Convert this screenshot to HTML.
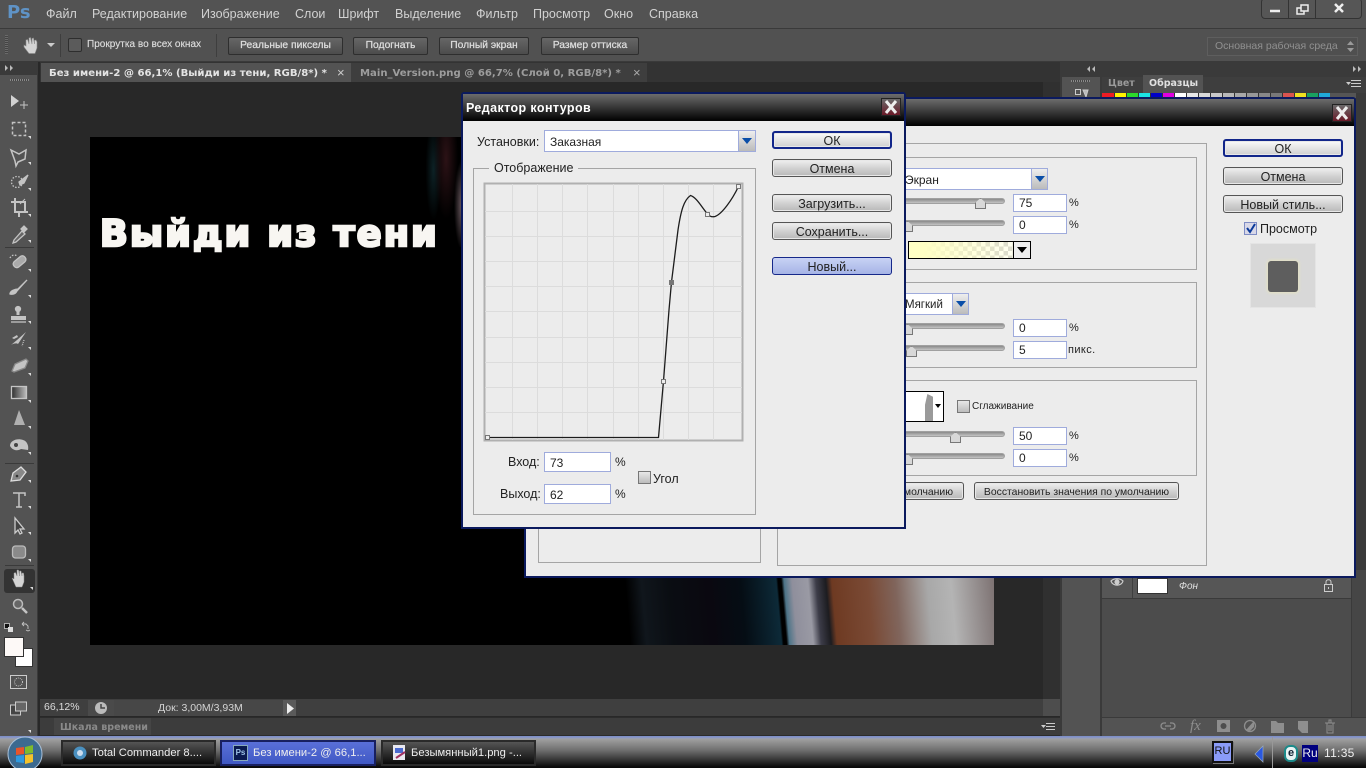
<!DOCTYPE html>
<html lang="ru"><head><meta charset="utf-8"><title>Photoshop</title>
<style>
html,body{margin:0;padding:0;width:1366px;height:768px;overflow:hidden;background:#282828}
body{position:relative;font-family:"Liberation Sans",sans-serif;font-size:12px;color:#222}
div,span,svg{position:absolute;box-sizing:border-box}
.t{white-space:nowrap;line-height:14px}
.m{top:7px;color:#d2d2d2;font-size:12.5px}
.ob{top:37px;height:18px;border:1px solid #2e2e2e;border-radius:2px;background:linear-gradient(#666,#4c4c4c);color:#dedede;font:10.300px/15px "Liberation Sans",sans-serif;text-align:center;white-space:nowrap;-webkit-text-stroke:.25px #dedede}
.tab{font:bold 10.100px/19px "DejaVu Sans",sans-serif;white-space:nowrap}
.dlg{background:#ececec;border:2px solid #0b1a5e;border-radius:3px 3px 0 0}
.title{left:0;right:0;top:0;background:linear-gradient(#6c6c6c,#000)}
.x{background:linear-gradient(#6a6a6a,#6a1a28);border:1px solid #222}
.btn{border:1px solid #555;border-radius:3px;background:linear-gradient(#f0f0f0,#d2d2d2 50%,#b8b8b8);box-shadow:inset 0 0 0 1px #e8e8e8;text-align:center;font-size:12.5px;line-height:19px;color:#222;white-space:nowrap}
.ok{border:2px solid #12268a;line-height:17px;background:linear-gradient(#fafafa,#cfcfcf)}
.group{border:1px solid #a5a5a5}
.inp{background:#fff;border:1px solid #9fabdc;font-size:12px;line-height:17px;padding-left:5px;color:#222}
.ddarrow{background:linear-gradient(#eee,#bbb);border-left:1px solid #9fabdc}
.ddarrow:after{content:"";position:absolute;left:3px;top:7px;border:5px solid transparent;border-top:6px solid #0a4ea8;border-bottom:0}
.track{height:6px;border-radius:3px;background:linear-gradient(#8a8a8a,#c4c4c4);border:1px solid #a0a0a0}
.th{width:11px;height:11px;background:#d8d8d8;border:1px solid #777;clip-path:polygon(50% 0,100% 45%,100% 100%,0 100%,0 45%)}
.cb{background:linear-gradient(#e8e8e8,#bcbcbc);border:1px solid #777}
.tb{color:#eee;font-size:12.5px;white-space:nowrap;line-height:14px}
.task{top:740px;height:26px;border:2px solid #2a2a2a;background:linear-gradient(#555,#0a0a0a)}
</style></head><body>

<!-- menu bar -->
<div style="left:0;top:0;width:1366px;height:29px;background:#535353;border-bottom:1px solid #3a3a3a"></div>
<div class="t" style="left:7px;top:2px;font:bold 18px/22px 'DejaVu Sans',sans-serif;color:#5f93c6">Ps</div>
<span class="t m" style="left:46px">Файл</span>
<span class="t m" style="left:92px">Редактирование</span>
<span class="t m" style="left:201px">Изображение</span>
<span class="t m" style="left:295px">Слои</span>
<span class="t m" style="left:338px">Шрифт</span>
<span class="t m" style="left:395px">Выделение</span>
<span class="t m" style="left:476px">Фильтр</span>
<span class="t m" style="left:533px">Просмотр</span>
<span class="t m" style="left:604px">Окно</span>
<span class="t m" style="left:649px">Справка</span>
<!-- window controls -->
<div style="left:1261px;top:-2px;width:101px;height:21px;border:1px solid #333;border-radius:4px;background:#565656">
<div style="left:26px;top:0;width:1px;height:20px;background:#333"></div><div style="left:53px;top:0;width:1px;height:20px;background:#333"></div></div>
<svg style="left:1261px;top:0" width="101" height="18" fill="none" stroke="#eee">
<path d="M9 11h10" stroke-width="2.5"/>
<rect x="36" y="8" width="7" height="6" stroke-width="1.5"/><rect x="40" y="5" width="7" height="6" stroke-width="1.5" fill="#565656"/>
<path d="M74 4l8 8M82 4l-8 8" stroke-width="2.5"/></svg>

<!-- options bar -->
<div style="left:0;top:29px;width:1366px;height:33px;background:#515151;border-bottom:1px solid #3a3a3a"></div>
<div style="left:5px;top:35px;width:3px;height:19px;background:repeating-linear-gradient(#6a6a6a 0 1px,#444 1px 2px)"></div>
<svg style="left:21px;top:36px" width="20" height="19" viewBox="0 0 20 19"><path d="M3 9l2 1V4l1.600-.5L8 8V2l1.500-.5L11 8V2.500L12.500 2l1 6V4.500L15 4l1 2v6l-2 5.500H8L3 11z" fill="#d4d4d4" stroke="#888" stroke-width=".6"/></svg>
<svg style="left:47px;top:43px" width="9" height="5"><path d="M0 0h8L4 4z" fill="#ccc"/></svg>
<div style="left:60px;top:34px;width:1px;height:23px;background:#3e3e3e"></div>
<div style="left:68px;top:38px;width:14px;height:14px;background:#5b5b5b;border:1px solid #2e2e2e;border-radius:2px"></div>
<span class="t" style="left:87px;top:38px;font-size:10.050px;color:#dcdcdc;-webkit-text-stroke:.15px #dcdcdc">Прокрутка во всех окнах</span>
<div style="left:216px;top:34px;width:1px;height:23px;background:#3e3e3e"></div>
<div class="ob" style="left:228px;width:115px">Реальные пикселы</div>
<div class="ob" style="left:353px;width:75px">Подогнать</div>
<div class="ob" style="left:439px;width:90px">Полный экран</div>
<div class="ob" style="left:541px;width:98px">Размер оттиска</div>
<div style="left:1207px;top:37px;width:151px;height:19px;background:#4f4f4f;border:1px solid #5e5e5e"></div>
<span class="t" style="left:1215px;top:39px;font-size:10.500px;color:#909090">Основная рабочая среда</span>
<svg style="left:1347px;top:41px" width="8" height="11" fill="#9a9a9a"><path d="M0 4l3.500-4L7 4zM0 7h7l-3.500 4z"/></svg>

<!-- document tabs -->
<div style="left:40px;top:62px;width:1020px;height:20px;background:#333"></div>
<div style="left:41px;top:63px;width:310px;height:19px;background:#535353"></div>
<span class="tab" style="left:49px;top:64px;color:#e4e4e4">Без имени-2 @ 66,1% (Выйди из тени, RGB/8*) *</span>
<span class="t" style="left:337px;top:66px;font-size:13px;color:#ccc">×</span>
<div style="left:351px;top:63px;width:296px;height:19px;background:#3e3e3e"></div>
<span class="tab" style="left:360px;top:64px;color:#9d9d9d">Main_Version.png @ 66,7% (Слой 0, RGB/8*) *</span>
<span class="t" style="left:633px;top:66px;font-size:13px;color:#aaa">×</span>

<!-- canvas -->
<div style="left:40px;top:82px;width:1003px;height:617px;background:#282828"></div>
<div style="left:1043px;top:82px;width:17px;height:617px;background:#303030"></div>
<div style="left:90px;top:137px;width:904px;height:508px;background:#000"></div>
<div style="left:405px;top:137px;width:57px;height:110px;background:radial-gradient(ellipse 12px 60px at 72% 20%,#2c1216,transparent),radial-gradient(ellipse 8px 50px at 50% 30%,#0d2226,transparent),radial-gradient(ellipse 8px 45px at 100% 62%,#6b5a60,transparent)"></div>
<div style="left:603px;top:575px;width:391px;height:70px;background:linear-gradient(85deg,#000 0,#000 7%,#10161c 11%,#0a0d12 18%,#0a0810 28%,#050d14 36%,#0a202c 42%,#0d2a38 45%,#000 45.500%,#000 46.300%,#4d7488 47%,#8f8f9c 49%,#9a9aa4 53%,#3c3c48 55%,#1c1c20 57.500%,#6e3a22 59%,#7a4a35 68%,#80655c 75%,#a8a8a8 83%,#b4b4b4 89%,#7d7272 100%)"></div>
<div class="t" style="left:100px;top:211px;font:bold 36.500px/46px 'DejaVu Sans',sans-serif;color:#f8f6f2;-webkit-text-stroke:2.600px #f8f6f2;letter-spacing:2.200px">Выйди из тени</div>

<!-- status + timeline -->
<div style="left:40px;top:699px;width:1003px;height:17px;background:#3f3f3f"></div>
<div style="left:1043px;top:699px;width:17px;height:17px;background:#4d4d4d"></div>
<div style="left:40px;top:717px;width:1020px;height:19px;background:#3c3c3c;border-top:1px solid #2c2c2c;border-bottom:1px solid #2c2c2c"></div>
<div style="left:88px;top:700px;width:26px;height:16px;background:#4a4a4a"></div>
<div style="left:114px;top:700px;width:169px;height:16px;background:#474747"></div>
<div style="left:283px;top:700px;width:13px;height:16px;background:#5a5a5a"></div>
<span class="t" style="left:44px;top:700px;font-size:10.500px;color:#dcdcdc">66,12%</span>
<svg style="left:94px;top:701px" width="14" height="14"><circle cx="7" cy="7" r="6" fill="#bbb"/><path d="M7 3v4h4" stroke="#444" fill="none" stroke-width="1.500"/></svg>
<span class="t" style="left:158px;top:701px;font-size:10.500px;color:#d4d4d4">Док: 3,00М/3,93М</span>
<svg style="left:286px;top:703px" width="9" height="11"><path d="M1 0l7 5.500L1 11z" fill="#eee"/></svg>
<div style="left:54px;top:718px;width:97px;height:17px;background:#454545"></div>
<span class="t" style="left:60px;top:721px;font:bold 9.500px/14px 'DejaVu Sans',sans-serif;color:#8a8a8a">Шкала времени</span>
<svg style="left:1041px;top:722px" width="15" height="10" fill="#ccc"><path d="M0 3h5L2.500 6z"/><path d="M5 1h9v1H5zM5 4h9v1H5zM5 7h9v1H5z"/></svg>

<!-- toolbar -->
<div style="left:0;top:62px;width:38px;height:674px;background:#535353;border-right:1px solid #3a3a3a"></div>
<div style="left:0;top:62px;width:38px;height:13px;background:#3a3a3a"></div>
<svg style="left:5px;top:65px" width="10" height="7" fill="#bbb"><path d="M0 0l3 3-3 3zM5 0l3 3-3 3z"/></svg>
<div style="left:10px;top:79px;width:19px;height:2px;background:repeating-linear-gradient(90deg,#8a8a8a 0 1px,#444 1px 2px)"></div>
<div style="left:4px;top:569px;width:31px;height:24px;background:#333;border-radius:3px"></div>
<svg style="left:0;top:85px" width="38" height="650" viewBox="0 85 38 650" fill="none" stroke="#c4c4c4" stroke-width="1.300">
<defs><linearGradient id="g1"><stop offset="0" stop-color="#2e2e2e"/><stop offset="1" stop-color="#bdbdbd"/></linearGradient></defs>
<path d="M11 95v12l8-6z" fill="#d2d2d2" stroke="none"/><path d="M20 105h8M24 101v8" stroke-width="1"/>
<rect x="12.500" y="122.500" width="13" height="13" stroke-dasharray="3 2" stroke-width="1.500"/>
<path d="M11 150l8 4 7-4-1 9-7 3-2 4-1-5z" stroke-width="1.500"/>
<circle cx="17" cy="182" r="5.500" stroke-dasharray="1.500 1.500"/><path d="M19 182l9-7-4 8-4 2z" fill="#c4c4c4"/>
<path d="M11 202h14v11M15 198v14h13M19 212v5" stroke-width="2"/><path d="M20 204l5-5" stroke-width="1"/>
<path d="M14 240l8-9 3 3-9 8-3 1z" fill="#666"/><path d="M21 229l3-3 3 3-3 3z" fill="#c4c4c4"/>
<rect x="-5" y="-3.500" width="14" height="7" rx="3" transform="translate(18 263) rotate(-40)" fill="#aaa"/><path d="M10 258c2-4 6-3 7-2" stroke-dasharray="1.500 1.500"/>
<path d="M10 294c4 1 6-1 7-3l10-11-9 9c-3 0-8 2-8 5z" fill="#c4c4c4"/>
<circle cx="18" cy="309" r="2.500" fill="#c4c4c4"/><path d="M18 311v4" stroke-width="3"/><path d="M11 316h15v4H11z" fill="#c4c4c4" stroke="none"/><path d="M11 322h15"/>
<path d="M12 338l5-3 1 2-4 2zM11 345c3-2 6-2 7-1l8-12-9 8z" fill="#c4c4c4" stroke="none"/><path d="M24 340l-2 6" stroke-dasharray="1 1"/>
<path d="M12 371l3-7 11-5 2 2-3 7-11 4z" fill="#c4c4c4" stroke="#888"/>
<rect x="11.500" y="386.500" width="15" height="12" fill="url(#g1)" stroke="#c4c4c4"/>
<path d="M19 410l-5 15h11z" fill="#b0b0b0" stroke="none"/>
<path d="M10 446c0-6 8-8 13-6 4 1 6 6 5 10l-7-1c-3 2-8 2-11-3z" fill="#c4c4c4" stroke="none"/><circle cx="16" cy="445" r="2" fill="#444" stroke="none"/>
<path d="M11 481l2-8 8-6 5 5-6 8z" fill="#888" stroke="#ddd"/><circle cx="17" cy="476" r="1.300" fill="#333" stroke="none"/>
<path d="M13 493h12v3M19 493v14M16 507h6" stroke-width="1.500"/>
<path d="M15 518v15l3-3 2 4 2-1-2-4h4z" fill="#444" stroke="#ccc"/>
<rect x="12.500" y="546" width="13" height="12" rx="3" fill="#8a8a8a" stroke="#bbb"/>
<path d="M12 578l2 1v-6l1.500-.5L17 576v-6h1.500l1 6v-5h1.500l1 5v-3h1.500l.5 3v6l-2 5h-6z" fill="#d4d4d4" stroke="#888" stroke-width=".5"/>
<circle cx="18" cy="604" r="4.500" fill="#666" stroke="#bbb" stroke-width="1.500"/><path d="M22 608l5 5" stroke-width="2.500"/>
<rect x="4.500" y="623.500" width="5" height="5" fill="#111" stroke="#ccc" stroke-width=".8"/><rect x="8" y="627" width="5" height="5" fill="#ddd" stroke="none"/>
<path d="M23 624h3l2 2v3M22 624l2-2M22 624l2 2M26 630l2 1 2-1" stroke-width=".9"/>
<rect x="10.500" y="675.500" width="16" height="13" stroke="#ccc" stroke-width="1"/><circle cx="18.500" cy="682" r="4" stroke-dasharray="1 1" stroke-width="1"/>
<rect x="10.500" y="705" width="10" height="10" fill="#444" stroke="#ccc" stroke-width="1"/><rect x="15.500" y="702" width="11" height="9" fill="#666" stroke="#ccc" stroke-width="1"/>
</svg>
<svg style="left:0;top:85px" width="38" height="650" viewBox="0 85 38 650" fill="#ddd">
<path d="M31 139v-3h-3zM31 165v-3h-3zM31 191v-3h-3zM31 217v-3h-3zM31 243v-3h-3zM31 272v-3h-3zM31 298v-3h-3zM31 324v-3h-3zM31 350v-3h-3zM31 376v-3h-3zM31 403v-3h-3zM31 429v-3h-3zM31 455v-3h-3zM31 483v-3h-3zM31 509v-3h-3zM31 535v-3h-3zM31 562v-3h-3zM33 590v-3h-3zM31 733v-3h-3z"/>
<path d="M5 247h29v1H5zM5 463h29v1H5zM5 565h29v1H5z" fill="#3a3a3a"/></svg>
<div style="left:15px;top:648px;width:18px;height:19px;background:#fff;border:1px solid #333"></div>
<div style="left:4px;top:637px;width:20px;height:20px;background:#fdf9f7;border:1px solid #333"></div>

<!-- right panels -->
<div style="left:1060px;top:62px;width:306px;height:674px;background:#3a3a3a"></div>
<div style="left:1062px;top:77px;width:38px;height:659px;background:#535353"></div>
<div style="left:1102px;top:77px;width:264px;height:16px;background:#3e3e3e"></div>
<div style="left:1143px;top:75px;width:60px;height:18px;background:#535353"></div>
<span class="t" style="left:1108px;top:77px;font:bold 9.500px/14px 'DejaVu Sans',sans-serif;color:#9a9a9a">Цвет</span>
<span class="t" style="left:1149px;top:77px;font:bold 9.500px/14px 'DejaVu Sans',sans-serif;color:#e0e0e0">Образцы</span>
<svg style="left:1086px;top:66px" width="10" height="7" fill="#bbb"><path d="M4 0L1 3l3 3zM9 0L6 3l3 3z"/></svg>
<svg style="left:1353px;top:66px" width="10" height="7" fill="#bbb"><path d="M0 0l3 3-3 3zM5 0l3 3-3 3z"/></svg>
<svg style="left:1346px;top:79px" width="16" height="10" fill="#ccc"><path d="M0 3h5L2.500 6z"/><path d="M5 1h10v1H5zM5 4h10v1H5zM5 7h10v1H5z"/></svg>
<div style="left:1071px;top:80px;width:19px;height:2px;background:repeating-linear-gradient(90deg,#8a8a8a 0 1px,#444 1px 2px)"></div>
<svg style="left:1075px;top:89px" width="14" height="9" fill="none" stroke="#ccc"><rect x=".5" y=".5" width="5" height="5"/><path d="M8 1h5l-2 7z" fill="#bbb"/></svg>
<div style="left:1102px;top:93px;width:254px;height:5px;background:linear-gradient(90deg,#ed1c24 0 12px,#333 12px 13px,#fff200 13px 24px,#333 24px 25px,#2bd92b 25px 36px,#333 36px 37px,#1be4e4 37px 48px,#333 48px 49px,#0000c8 49px 60px,#333 60px 61px,#e000e0 61px 72px,#333 72px 73px,#fff 73px 84px,#333 84px 85px,#e8e8e8 85px 96px,#333 96px 97px,#d8d8d8 97px 108px,#333 108px 109px,#c8c8c8 109px 120px,#333 120px 121px,#b8b8b8 121px 132px,#333 132px 133px,#a8a8a8 133px 144px,#333 144px 145px,#989898 145px 156px,#333 156px 157px,#888 157px 168px,#333 168px 169px,#787878 169px 180px,#333 180px 181px,#d9534f 181px 192px,#333 192px 193px,#f0e020 193px 204px,#333 204px 205px,#19a060 205px 216px,#333 216px 217px,#20a8d8 217px 228px,#555 228px)"></div>
<div style="left:1102px;top:570px;width:264px;height:166px;background:#4c4c4c"></div>
<div style="left:1102px;top:578px;width:249px;height:21px;background:#565656;border-bottom:1px solid #3a3a3a"></div>
<div style="left:1132px;top:578px;width:1px;height:20px;background:#3e3e3e"></div>
<div style="left:1351px;top:570px;width:15px;height:147px;background:#464646;border-left:1px solid #3a3a3a"></div>
<svg style="left:1110px;top:578px" width="14" height="11" fill="none" stroke="#ccc" stroke-width="1.200"><path d="M1 3c3-3 9-3 12 0-1 5-10 6-12 0z"/><circle cx="7" cy="4" r="2" fill="#ccc"/></svg>
<div style="left:1137px;top:578px;width:31px;height:16px;background:#fff;border:1px solid #333"></div>
<span class="t" style="left:1179px;top:580px;font-size:10px;font-style:italic;color:#e0e0e0">Фон</span>
<svg style="left:1323px;top:579px" width="11" height="13" fill="none" stroke="#ccc"><rect x="1.500" y="5.500" width="8" height="7"/><path d="M3 5V3c0-3 5-3 5 0v2"/><path d="M5.500 8v2"/></svg>
<div style="left:1102px;top:717px;width:264px;height:19px;background:#535353;border-top:1px solid #3a3a3a"></div>
<svg style="left:1160px;top:718px" width="180" height="16" fill="#8e8e8e" stroke="#8e8e8e">
<path d="M6 5H4a3 3 0 000 6h2M10 5h2a3 3 0 010 6h-2M5 8h6" fill="none" stroke-width="1.300"/>
<rect x="57" y="2" width="13" height="12" stroke="none"/><circle cx="63.500" cy="8" r="3" fill="#4e4e4e" stroke="none"/>
<circle cx="90" cy="8" r="5.500" fill="none" stroke-width="1.300"/><path d="M86 12L94 3v6l-4 4z" stroke="none"/>
<path d="M111 3h5l2 2h6v10h-13z" stroke="none"/>
<path d="M138 3h10v12h-6l-4-4z" stroke="none"/>
<path d="M165 5h10M167 5v10h6V5M169 5V2h2v3M169 7v6M171 7v6" fill="none"/></svg>
<span class="t" style="left:1190px;top:718px;font:italic 15px/16px 'Liberation Serif',serif;color:#8e8e8e">fx</span>

<!-- second dialog -->
<div class="dlg" style="left:524px;top:97px;width:832px;height:481px">
 <div class="title" style="height:27px"></div>
 <div class="x" style="left:806px;top:5px;width:20px;height:18px"></div>
 <svg style="left:806px;top:5px" width="20" height="18"><path d="M5 3l10 12M15 3L5 15" stroke="#eee" stroke-width="3"/></svg>
</div>
<div class="group" style="left:538px;top:500px;width:223px;height:63px"></div>
<div class="group" style="left:777px;top:143px;width:430px;height:423px"></div>
<div class="group" style="left:800px;top:157px;width:397px;height:113px"></div>
<div class="group" style="left:800px;top:282px;width:397px;height:86px"></div>
<div class="group" style="left:800px;top:380px;width:397px;height:96px"></div>
<div style="left:880px;top:168px;width:168px;height:22px;background:#fff;border:1px solid #9fabdc"></div>
<div class="ddarrow" style="left:1031px;top:169px;width:16px;height:20px"></div>
<span class="t" style="left:905px;top:173px">Экран</span>
<div class="track" style="left:880px;top:198px;width:125px"></div><div class="th" style="left:975px;top:198px"></div>
<div class="inp" style="left:1013px;top:194px;width:54px;height:18px">75</div><span class="t" style="left:1069px;top:196px;font-size:11px">%</span>
<div class="track" style="left:880px;top:220px;width:125px"></div><div class="th" style="left:902px;top:221px"></div>
<div class="inp" style="left:1013px;top:216px;width:54px;height:18px">0</div><span class="t" style="left:1069px;top:218px;font-size:11px">%</span>
<div style="left:908px;top:241px;width:123px;height:18px;border:1px solid #000;background:linear-gradient(90deg,#ffffc4 0,#ffffc4 12%,rgba(255,255,196,.1) 100%),repeating-conic-gradient(#cfcfcf 0 25%,#fff 0 50%) 0 0/9px 9px"></div>
<div style="left:1013px;top:241px;width:18px;height:18px;background:#eee;border:1px solid #000"></div>
<svg style="left:1017px;top:247px" width="11" height="6"><path d="M0 0h10L5 6z"/></svg>
<div style="left:880px;top:293px;width:89px;height:22px;background:#fff;border:1px solid #9fabdc"></div>
<div class="ddarrow" style="left:952px;top:294px;width:16px;height:20px"></div>
<span class="t" style="left:905px;top:298px;font-size:11.500px">Мягкий</span>
<div class="track" style="left:880px;top:323px;width:125px"></div><div class="th" style="left:902px;top:324px"></div>
<div class="inp" style="left:1013px;top:319px;width:54px;height:18px">0</div><span class="t" style="left:1069px;top:321px;font-size:11px">%</span>
<div class="track" style="left:880px;top:345px;width:125px"></div><div class="th" style="left:906px;top:346px"></div>
<div class="inp" style="left:1013px;top:341px;width:54px;height:18px">5</div><span class="t" style="left:1068px;top:343px;font-size:11px;letter-spacing:.4px">пикс.</span>
<div style="left:880px;top:391px;width:64px;height:31px;background:#fff;border:1px solid #000"></div>
<div style="left:925px;top:394px;width:8px;height:27px;background:#9a9a9a;clip-path:polygon(30% 0,100% 10%,100% 100%,0 100%,0 40%)"></div>
<svg style="left:935px;top:404px" width="6" height="4"><path d="M0 0h6L3 4z"/></svg>
<div class="cb" style="left:957px;top:400px;width:13px;height:13px"></div>
<span class="t" style="left:972px;top:400px;font-size:10px">Сглаживание</span>
<div class="track" style="left:880px;top:431px;width:125px"></div><div class="th" style="left:950px;top:432px"></div>
<div class="inp" style="left:1013px;top:427px;width:54px;height:18px">50</div><span class="t" style="left:1069px;top:429px;font-size:11px">%</span>
<div class="track" style="left:880px;top:453px;width:125px"></div><div class="th" style="left:902px;top:454px"></div>
<div class="inp" style="left:1013px;top:449px;width:54px;height:18px">0</div><span class="t" style="left:1069px;top:451px;font-size:11px">%</span>
<div class="btn" style="left:860px;top:482px;width:104px;height:18px;text-align:right;padding-right:10px;font-size:10.400px">По умолчанию</div>
<div class="btn" style="left:974px;top:482px;width:205px;height:18px;font-size:10.400px">Восстановить значения по умолчанию</div>
<div class="btn ok" style="left:1223px;top:139px;width:120px;height:18px">ОК</div>
<div class="btn" style="left:1223px;top:167px;width:120px;height:18px">Отмена</div>
<div class="btn" style="left:1223px;top:195px;width:120px;height:18px">Новый стиль...</div>
<div style="left:1244px;top:222px;width:13px;height:13px;background:#d8d8e8;border:1px solid #7e8cc4"></div>
<svg style="left:1245px;top:223px" width="11" height="11"><path d="M2 5l3 4 5-8" fill="none" stroke="#0a3a9a" stroke-width="2"/></svg>
<span class="t" style="left:1260px;top:222px;font-size:12.500px">Просмотр</span>
<div style="left:1250px;top:243px;width:66px;height:65px;background:#d8d8d8;border:1px solid #e4e4e4"></div>
<div style="left:1268px;top:261px;width:30px;height:31px;background:#5e5e5e;border-radius:3px;box-shadow:0 0 3px 1px #e6e3c0"></div>

<!-- contour editor dialog -->
<div class="dlg" style="left:461px;top:92px;width:445px;height:437px">
 <div class="title" style="height:27px"></div>
 <div class="x" style="left:418px;top:4px;width:20px;height:18px"></div>
 <svg style="left:418px;top:4px" width="20" height="18"><path d="M5 3l10 12M15 3L5 15" stroke="#eee" stroke-width="3"/></svg>
</div>
<span class="t" style="left:466px;top:101px;font-size:12.500px;font-weight:bold;color:#fff;letter-spacing:.4px">Редактор контуров</span>
<span class="t" style="left:477px;top:135px;font-size:12.500px">Установки:</span>
<div style="left:544px;top:130px;width:212px;height:22px;background:#fff;border:1px solid #9fabdc"></div>
<div class="ddarrow" style="left:738px;top:131px;width:17px;height:20px"></div>
<span class="t" style="left:550px;top:135px">Заказная</span>
<div class="btn ok" style="left:772px;top:131px;width:120px;height:18px">ОК</div>
<div class="btn" style="left:772px;top:159px;width:120px;height:18px">Отмена</div>
<div class="btn" style="left:772px;top:194px;width:120px;height:18px">Загрузить...</div>
<div class="btn" style="left:772px;top:222px;width:120px;height:18px">Сохранить...</div>
<div class="btn" style="left:772px;top:257px;width:120px;height:18px;border:1px solid #16288a;background:linear-gradient(#c8d2f4,#a6b4e6);box-shadow:none">Новый...</div>
<div class="group" style="left:473px;top:168px;width:283px;height:347px"></div>
<div class="t" style="left:489px;top:161px;padding:0 5px;background:#ececec;font-size:12.500px">Отображение</div>
<svg style="left:483px;top:182px" width="261" height="260" viewBox="483 182 261 260" shape-rendering="crispEdges">
<rect x="484.500" y="183.500" width="258" height="257" fill="#ececec" stroke="#b0b0b0" stroke-width="2"/>
<path d="M512.500 184v256M537.500 184v256M562.500 184v256M587.500 184v256M613.500 184v256M638.500 184v256M663.500 184v256M688.500 184v256M713.500 184v256M485 211.500h257M485 236.500h257M485 261.500h257M485 286.500h257M485 311.500h257M485 337.500h257M485 362.500h257M485 387.500h257M485 412.500h257" stroke="#dcdcdc" fill="none"/>
<path d="M487 437.500H658.500L663.500 381L669 310L671.500 282L678 230C681 210 684 200 690.500 195.500C696 197 701 206 707.500 214C710 217 713 217 715 216.500C722 214 732 200 738.500 186.500" fill="none" stroke="#1c1c1c" stroke-width="1.300" shape-rendering="auto"/>
<rect x="485.500" y="435.500" width="4" height="4" fill="#eee" stroke="#777"/>
<rect x="661.500" y="379.500" width="4" height="4" fill="#eee" stroke="#777"/>
<rect x="669" y="280" width="5" height="5" fill="#777"/>
<rect x="705.500" y="212.500" width="4" height="4" fill="#eee" stroke="#777"/>
<rect x="736.500" y="184.500" width="4" height="4" fill="#eee" stroke="#777"/>
</svg>
<span class="t" style="left:508px;top:455px;font-size:12.500px">Вход:</span>
<div class="inp" style="left:544px;top:452px;width:67px;height:20px;line-height:20px">73</div>
<span class="t" style="left:615px;top:455px;font-size:12px">%</span>
<span class="t" style="left:500px;top:487px;font-size:12.500px">Выход:</span>
<div class="inp" style="left:544px;top:484px;width:67px;height:20px;line-height:20px">62</div>
<span class="t" style="left:615px;top:487px;font-size:12px">%</span>
<div class="cb" style="left:638px;top:471px;width:13px;height:13px"></div>
<span class="t" style="left:653px;top:472px;font-size:12.500px">Угол</span>

<!-- taskbar -->
<div style="left:0;top:736px;width:1366px;height:32px;background:linear-gradient(#7a8cc8 0,#8f9bc4 2px,#a0a0a0 3px,#707070 14px,#0a0a0a 31px)"></div>
<svg style="left:6px;top:736px" width="38" height="32" viewBox="0 0 38 32">
<circle cx="19" cy="18" r="17" fill="#3c6a90" stroke="#aac0d8"/>
<path d="M10 12l8-1v7l-8 1z" fill="#e8542a"/><path d="M19 11l8-2v8l-8 1z" fill="#7fbb2c"/><path d="M10 20l8-1v8l-8-1z" fill="#2e9ae0"/><path d="M19 19l8-1v8l-8 2z" fill="#f4c22a"/></svg>
<div class="task" style="left:61px;width:155px"></div>
<svg style="left:73px;top:746px" width="14" height="14"><circle cx="7" cy="7" r="6.500" fill="#4a90c0"/><circle cx="7" cy="7" r="3" fill="#cde" /></svg>
<span class="t tb" style="left:92px;top:746px;font-size:11.200px">Total Commander 8....</span>
<div class="task" style="left:220px;width:156px;background:linear-gradient(#5a70d8,#3f58c4);border-color:#182060"></div>
<div style="left:233px;top:745px;width:15px;height:16px;background:#0a1a50;border:1px solid #8ab;color:#9fc4ea;font:bold 8px/14px 'Liberation Sans',sans-serif;text-align:center">Ps</div>
<span class="t tb" style="left:253px;top:746px;font-size:11.200px">Без имени-2 @ 66,1...</span>
<div class="task" style="left:381px;width:155px"></div>
<svg style="left:393px;top:745px" width="14" height="16"><rect width="12" height="15" fill="#e8e8f0"/><path d="M2 3h8v5H2z" fill="#4a6ad0"/><path d="M3 13l9-6" stroke="#a03060" stroke-width="2"/></svg>
<span class="t tb" style="left:411px;top:746px;font-size:11.200px">Безымянный1.png -...</span>
<div style="left:1212px;top:741px;width:21px;height:22px;background:#8a9bf8;border:2px solid #111;color:#111;font-size:11px;line-height:17px;text-align:center;box-shadow:1px 1px 0 #777">RU</div>
<svg style="left:1254px;top:745px" width="11" height="18"><path d="M9 1v16L1 9z" fill="#2a58e0" stroke="#9ab" stroke-width=".7"/></svg>
<div style="left:1272px;top:737px;width:1px;height:31px;background:#999"></div>
<div style="left:1284px;top:745px;width:14px;height:17px;border-radius:6px;background:#e8f4f4;border:2px solid #1b8a8a;color:#123;font:bold 11px/12px 'Liberation Sans',sans-serif;text-align:center">e</div>
<div style="left:1302px;top:745px;width:16px;height:17px;background:#00007e;color:#eee;font-size:12px;line-height:16px;text-align:center">Ru</div>
<span class="t" style="left:1324px;top:746px;color:#eee;font-size:12px;letter-spacing:.3px">11:35</span>
</body></html>
